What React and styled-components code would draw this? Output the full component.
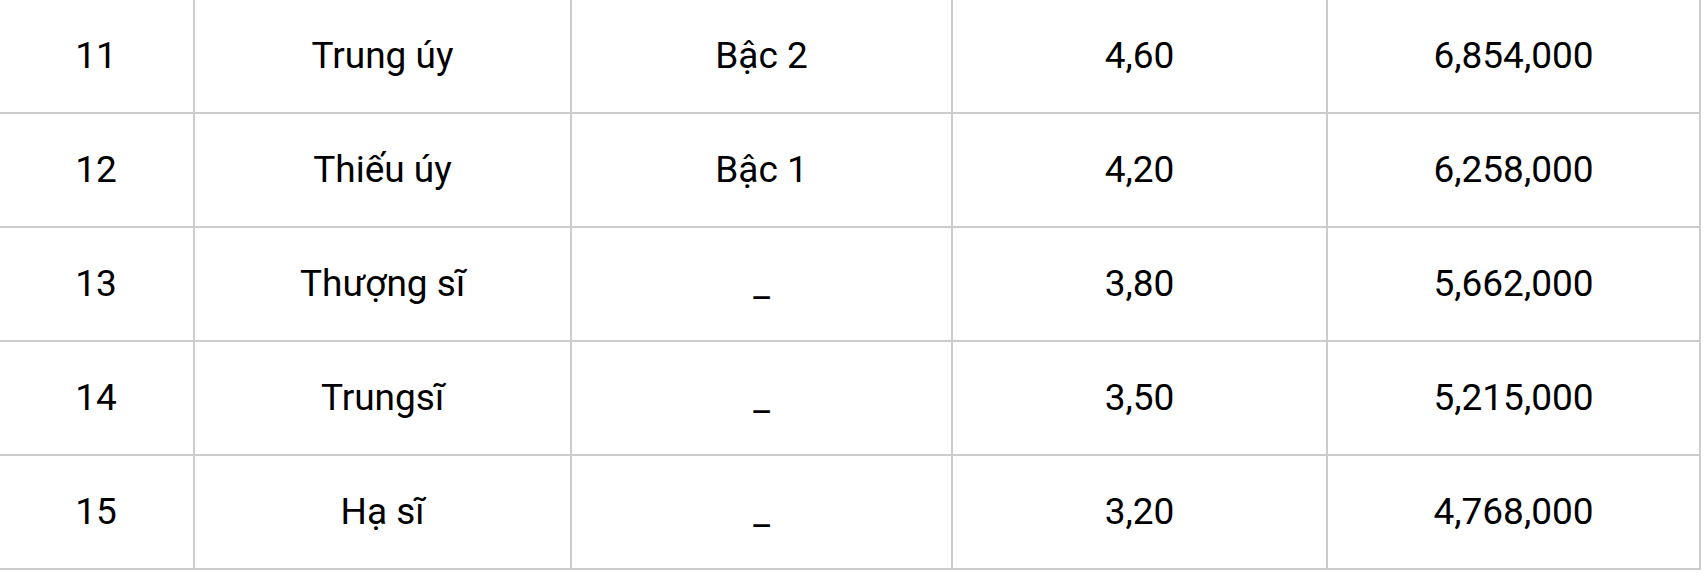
import React from "react";
import styled, { createGlobalStyle } from "styled-components";

const Global = createGlobalStyle`
  html, body { margin: 0; padding: 0; background: #fff; }
  body { font-family: Roboto, "Noto Sans", sans-serif; color: #000; overflow: hidden; }
`;

const Wrap = styled.div`
  margin: -2px 0 0 -3px;
`;

const Table = styled.table`
  width: 1702px;
  border-collapse: collapse;
  table-layout: fixed;
`;

const Row = styled.tr`
  height: 114px;
`;

const Cell = styled.td`
  border: 2px solid #cccccc;
  text-align: center;
  vertical-align: middle;
  font-size: 37px;
  line-height: 1.2;
  padding: 0;
`;

const cols = [196, 377, 381, 375, 373];

const rows = [
  ["11", "Trung úy", "Bậc 2", "4,60", "6,854,000"],
  ["12", "Thiếu úy", "Bậc 1", "4,20", "6,258,000"],
  ["13", "Thượng sĩ", "_", "3,80", "5,662,000"],
  ["14", "Trungsĩ", "_", "3,50", "5,215,000"],
  ["15", "Hạ sĩ", "_", "3,20", "4,768,000"],
];

export default function App() {
  return (
    <>
      <Global />
      <Wrap>
        <Table>
          <colgroup>
            {cols.map((w, i) => (
              <col key={i} style={{ width: w }} />
            ))}
          </colgroup>
          <tbody>
            {rows.map((r) => (
              <Row key={r[0]}>
                {r.map((c, i) => (
                  <Cell key={i}>{c}</Cell>
                ))}
              </Row>
            ))}
          </tbody>
        </Table>
      </Wrap>
    </>
  );
}
